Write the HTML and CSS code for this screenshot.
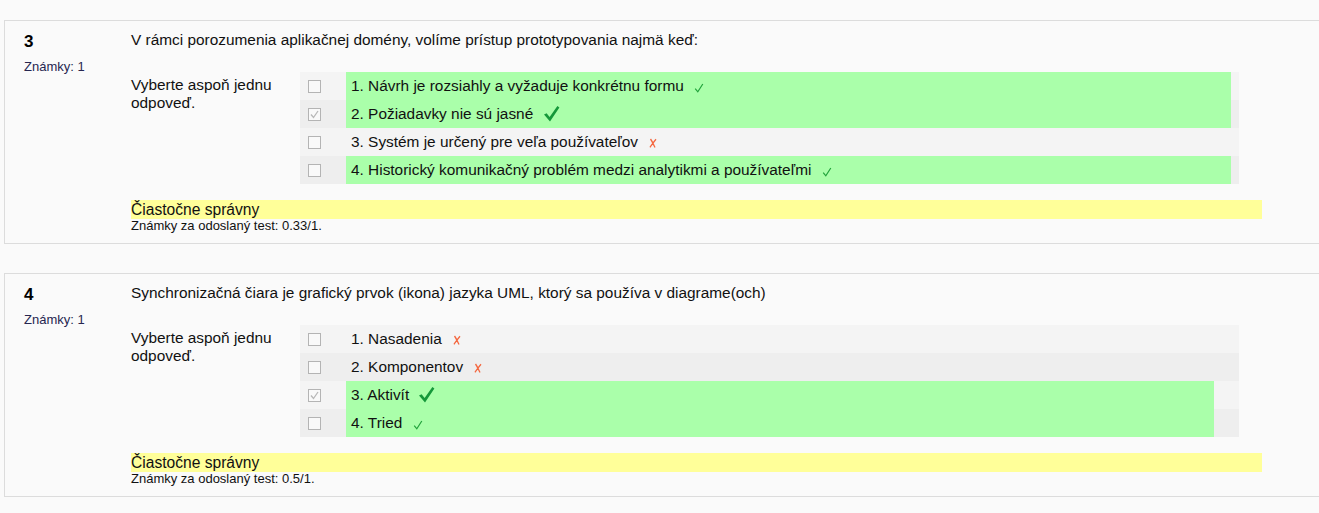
FILE: index.html
```html
<!DOCTYPE html>
<html lang="sk">
<head>
<meta charset="utf-8">
<title>Test</title>
<link rel="stylesheet" href="styles.css">
</head>
<body>
<div class="page">
  <div class="que">
    <div class="info">
      <div class="no">3</div>
      <div class="grade">Známky: 1</div>
    </div>
    <div class="content">
      <div class="qtext">V rámci porozumenia aplikačnej domény, volíme prístup prototypovania najmä keď:</div>
      <div class="ablock">
        <div class="prompt">Vyberte aspoň jednu odpoveď.</div>
        <div class="answers">
          <div class="row r0">
            <div class="cb"><span class="box"></span></div>
            <div class="label correct w1">1. Návrh je rozsiahly a vyžaduje konkrétnu formu <svg class="ok-s" width="10" height="10" viewBox="0 0 10 10"><path d="M1.2 5.6 L3.8 8.8 L8.8 1" fill="none" stroke="#22a33c" stroke-width="1.2"/></svg></div>
          </div>
          <div class="row r1">
            <div class="cb"><span class="box checked"><svg width="11" height="11" viewBox="0 0 11 11"><path d="M2 5.5 L4.5 8.5 L9 2" fill="none" stroke="#b8b8b8" stroke-width="1.3"/></svg></span></div>
            <div class="label correct w1">2. Požiadavky nie sú jasné <svg class="ok-b" width="17" height="17" viewBox="0 0 17 17"><path d="M1 9.5 L3.6 8.2 L6.6 12 L14.4 1 L16.4 2.4 L7 16.4 Z" fill="#15983a"/></svg></div>
          </div>
          <div class="row r0">
            <div class="cb"><span class="box"></span></div>
            <div class="label w1">3. Systém je určený pre veľa používateľov <svg class="bad" width="8" height="10" viewBox="0 0 8 10"><path d="M1.5 1 C3 3 4.5 6.5 6 9.5 M7 1.2 C5 3.5 3 6.5 1 9.3" fill="none" stroke="#f4673f" stroke-width="1.3"/></svg></div>
          </div>
          <div class="row r1">
            <div class="cb"><span class="box"></span></div>
            <div class="label correct w1">4. Historický komunikačný problém medzi analytikmi a používateľmi <svg class="ok-s" width="10" height="10" viewBox="0 0 10 10"><path d="M1.2 5.6 L3.8 8.8 L8.8 1" fill="none" stroke="#22a33c" stroke-width="1.2"/></svg></div>
          </div>
        </div>
      </div>
      <div class="state">Čiastočne správny</div>
      <div class="score">Známky za odoslaný test: 0.33/1.</div>
    </div>
  </div>

  <div class="que">
    <div class="info">
      <div class="no">4</div>
      <div class="grade">Známky: 1</div>
    </div>
    <div class="content">
      <div class="qtext">Synchronizačná čiara je grafický prvok (ikona) jazyka UML, ktorý sa používa v diagrame(och)</div>
      <div class="ablock">
        <div class="prompt">Vyberte aspoň jednu odpoveď.</div>
        <div class="answers">
          <div class="row r0">
            <div class="cb"><span class="box"></span></div>
            <div class="label w2">1. Nasadenia <svg class="bad" width="8" height="10" viewBox="0 0 8 10"><path d="M1.5 1 C3 3 4.5 6.5 6 9.5 M7 1.2 C5 3.5 3 6.5 1 9.3" fill="none" stroke="#f4673f" stroke-width="1.3"/></svg></div>
          </div>
          <div class="row r1">
            <div class="cb"><span class="box"></span></div>
            <div class="label w2">2. Komponentov <svg class="bad" width="8" height="10" viewBox="0 0 8 10"><path d="M1.5 1 C3 3 4.5 6.5 6 9.5 M7 1.2 C5 3.5 3 6.5 1 9.3" fill="none" stroke="#f4673f" stroke-width="1.3"/></svg></div>
          </div>
          <div class="row r0">
            <div class="cb"><span class="box checked"><svg width="11" height="11" viewBox="0 0 11 11"><path d="M2 5.5 L4.5 8.5 L9 2" fill="none" stroke="#b8b8b8" stroke-width="1.3"/></svg></span></div>
            <div class="label correct w2">3. Aktivít <svg class="ok-b" width="17" height="17" viewBox="0 0 17 17"><path d="M1 9.5 L3.6 8.2 L6.6 12 L14.4 1 L16.4 2.4 L7 16.4 Z" fill="#15983a"/></svg></div>
          </div>
          <div class="row r1">
            <div class="cb"><span class="box"></span></div>
            <div class="label correct w2">4. Tried <svg class="ok-s" width="10" height="10" viewBox="0 0 10 10"><path d="M1.2 5.6 L3.8 8.8 L8.8 1" fill="none" stroke="#22a33c" stroke-width="1.2"/></svg></div>
          </div>
        </div>
      </div>
      <div class="state">Čiastočne správny</div>
      <div class="score">Známky za odoslaný test: 0.5/1.</div>
    </div>
  </div>
</div>
</body>
</html>
```

FILE: styles.css
```css
html, body {
  margin: 0;
  padding: 0;
  background: #fafafa;
  overflow: hidden;
}
body {
  font-family: "Liberation Sans", Arial, sans-serif;
  color: #111;
}
.page {
  padding: 20px 0 0 4px;
  display: flex;
  flex-direction: column;
  gap: 29px;
}
.que {
  display: flex;
  border: 1px solid #dcdcdc;
  border-right: 0;
  background: #fafafa;
}
.info {
  width: 107px;
  padding: 10px 0 0 19px;
  flex: none;
}
.no {
  font-size: 17px;
  font-weight: bold;
  line-height: 18px;
  padding-top: 2px;
  color: #000;
}
.grade {
  font-size: 13px;
  line-height: 14px;
  margin-top: 9px;
  color: #262650;
}
.content {
  flex: 1;
  padding: 10px 0 10px 0;
}
.qtext {
  font-size: 15.4px;
  line-height: 18px;
  margin-bottom: 23px;
}
.ablock {
  display: flex;
  margin-bottom: 16px;
}
.prompt {
  width: 152px;
  padding: 4px 17px 0 0;
  font-size: 15.4px;
  line-height: 18px;
  flex: none;
}
.answers {
  width: 939px;
  display: flex;
  flex-direction: column;
}
.row {
  display: flex;
  height: 28px;
}
.r0 { background: #f4f4f4; }
.r1 { background: #eeeeee; }
.cb {
  width: 46px;
  flex: none;
  display: flex;
  align-items: center;
  padding-left: 8px;
  box-sizing: border-box;
}
.box {
  width: 11px;
  height: 11px;
  border: 1px solid #b4b4b4;
  background: #f9f9f9;
  display: flex;
  align-items: center;
  justify-content: center;
}
.box svg { display: block; }
.label {
  display: flex;
  align-items: center;
  padding-left: 5px;
  box-sizing: border-box;
  font-size: 15.4px;
  white-space: pre;
}
.label.w1 { width: 885px; }
.label.w2 { width: 868px; }
.label.correct { background: #aaffaa; }
.label svg { margin-left: 5px; }
.label svg.ok-s { margin-left: 6px; margin-top: 3px; }
.label svg.ok-b { margin-left: 5px; margin-top: -1px; }
.label svg.bad { margin-left: 7px; margin-top: 2px; }
.state {
  width: 1131px;
  background: #ffff99;
  font-size: 15.6px;
  line-height: 19px;
}
.score {
  font-size: 13px;
  line-height: 14px;
  color: #111;
}
```
